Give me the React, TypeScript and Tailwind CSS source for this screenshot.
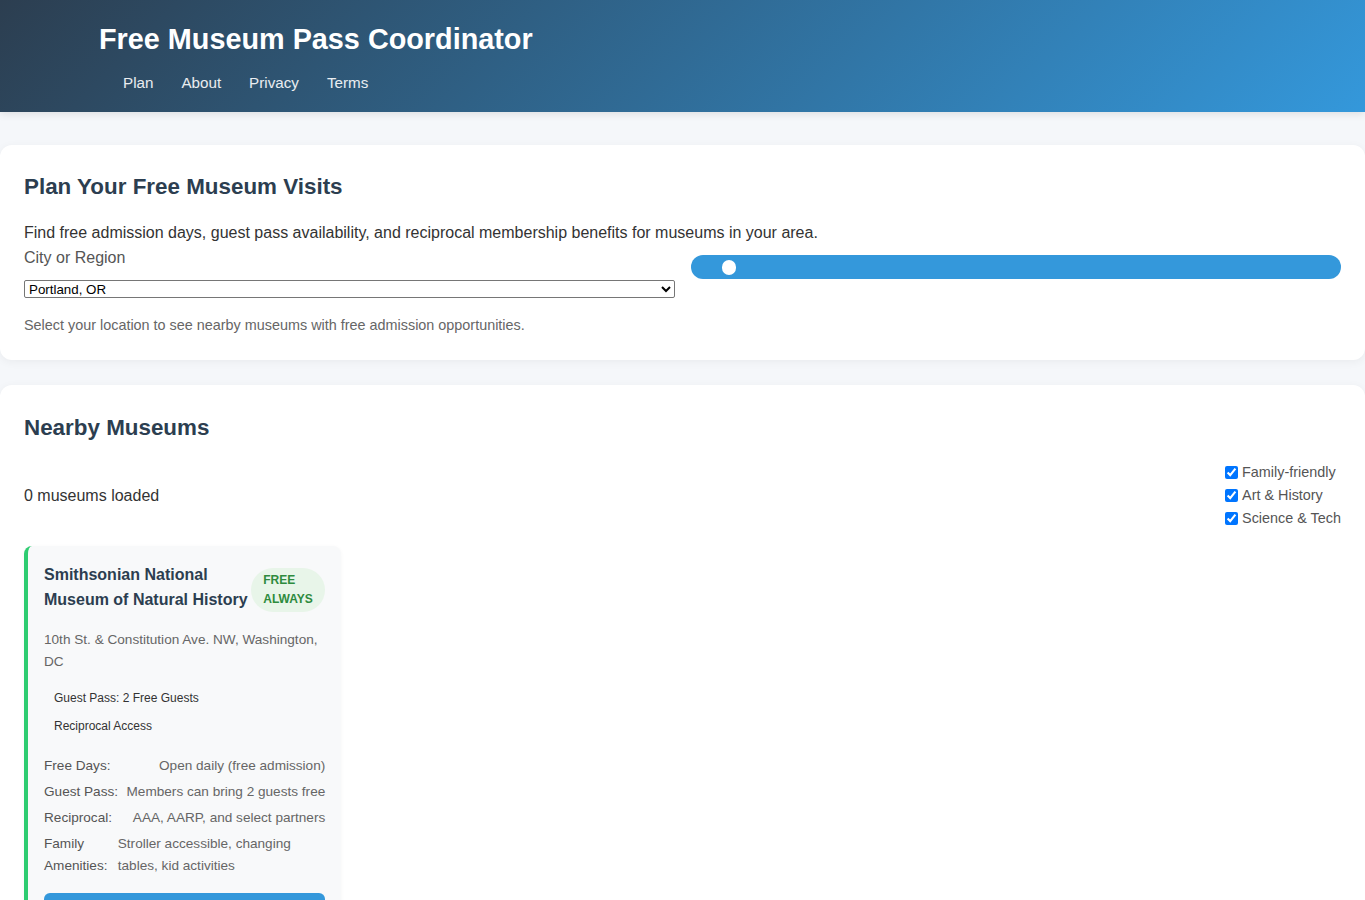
import React from 'react';

const details: [string, string][] = [
    ['Free Days:', 'Open daily (free admission)'],
    ['Guest Pass:', 'Members can bring 2 guests free'],
    ['Reciprocal:', 'AAA, AARP, and select partners'],
    ['Family Amenities:', 'Stroller accessible, changing tables, kid activities'],
];

const filters = ['Family-friendly', 'Art & History', 'Science & Tech'];

const App: React.FC = () => {
    return (
        <div className="min-h-screen bg-[#f5f7fa] text-[#333] font-['Liberation_Sans',Arial,sans-serif]">
            {/* Header */}
            <header className="h-[112px] bg-[linear-gradient(135deg,#2c3e50,#3498db)] px-[99px] pt-[20px] text-white shadow-[0_2px_8px_rgba(0,0,0,0.1)]">
                <h1 className="text-[28.8px] font-bold leading-[38px]">Free Museum Pass Coordinator</h1>
                <nav className="ml-6 mt-[15px] flex gap-7 text-[15.2px] leading-[20px] text-white/90">
                    <a href="#">Plan</a>
                    <a href="#">About</a>
                    <a href="#">Privacy</a>
                    <a href="#">Terms</a>
                </nav>
            </header>

            <main className="mt-[33px] flex flex-col gap-[25px]">
                {/* Plan card */}
                <section className="rounded-xl bg-white p-6 shadow-[0_2px_10px_rgba(0,0,0,0.05)]">
                    <h2 className="mb-4 text-[22.4px] font-bold leading-[36px] text-[#2c3e50]">Plan Your Free Museum Visits</h2>
                    <p className="text-[16px] leading-[24px]">
                        Find free admission days, guest pass availability, and reciprocal membership benefits for museums in your area.
                    </p>
                    <div className="mt-px grid grid-cols-2 gap-4">
                        <div>
                            <label className="block text-[16px] leading-[24px] text-[#555]">City or Region</label>
                            <select
                                defaultValue="Portland, OR"
                                className="mt-[10px] block h-[18px] w-full rounded-[2px] border border-[#767676] bg-white text-[13.33px] leading-[15px] text-black"
                            >
                                <option>Portland, OR</option>
                                <option>Seattle, WA</option>
                                <option>Washington, DC</option>
                            </select>
                            <p className="mt-4 text-[14.4px] leading-[22px] text-[#666]">
                                Select your location to see nearby museums with free admission opportunities.
                            </p>
                        </div>
                        <div className="pt-[9px]">
                            <div className="flex h-6 items-center rounded-full bg-[#3498db] pl-[31px]">
                                <div className="h-[15px] w-[14px] rounded-full bg-white"></div>
                            </div>
                        </div>
                    </div>
                </section>

                {/* Nearby museums */}
                <section className="rounded-xl bg-white px-6 pb-6 pt-[25px] shadow-[0_2px_10px_rgba(0,0,0,0.05)]">
                    <h2 className="mb-[15px] text-[22.4px] font-bold leading-[36px] text-[#2c3e50]">Nearby Museums</h2>
                    <div className="flex items-center justify-between">
                        <span className="text-[16px] leading-[24px]">0 museums loaded</span>
                        <div className="flex flex-col text-[14.4px] leading-[23px] text-[#555]">
                            {filters.map((f) => (
                                <label key={f} className="flex items-center">
                                    <input type="checkbox" defaultChecked className="mr-[4px] h-[13px] w-[13px]" />
                                    {f}
                                </label>
                            ))}
                        </div>
                    </div>

                    <div className="mt-4 grid grid-cols-4 gap-4">
                        <div className="rounded-lg border-l-4 border-[#2ecc71] bg-[#f8f9fa] p-4 shadow-[0_1px_4px_rgba(0,0,0,0.04)]">
                            <div className="mb-[17px] flex items-end justify-between gap-[2px]">
                                <h3 className="min-w-0 flex-1 text-[16px] font-bold leading-[25px] text-[#2c3e50]">
                                    Smithsonian National Museum of Natural History
                                </h3>
                                <span className="w-[74px] shrink-0 rounded-[22px] bg-[#e8f5e9] px-3 py-[3px] text-[12px] font-bold leading-[19px] text-[#2e8b3e]">
                                    FREE ALWAYS
                                </span>
                            </div>
                            <p className="text-[13.6px] leading-[22px] text-[#666]">
                                10th St. &amp; Constitution Ave. NW, Washington, DC
                            </p>
                            <div className="mt-3 flex flex-col items-start gap-[2px] text-[12px] leading-[18px] text-[#333]">
                                <span className="px-[10px] py-1">Guest Pass: 2 Free Guests</span>
                                <span className="px-[10px] py-1">Reciprocal Access</span>
                            </div>
                            <div className="mt-4 text-[13.6px] leading-[22px]">
                                {details.map(([k, v]) => (
                                    <div key={k} className="mb-1 flex justify-between gap-2">
                                        <span className="shrink-[1.3] text-[#555]">{k}</span>
                                        <span className="text-[#666]">{v}</span>
                                    </div>
                                ))}
                            </div>
                            <button className="mt-3 w-full rounded-md bg-[#3498db] py-[10px] text-[14px] font-bold text-white">
                                View Details
                            </button>
                        </div>
                    </div>
                </section>
            </main>
        </div>
    );
};

export default App;
